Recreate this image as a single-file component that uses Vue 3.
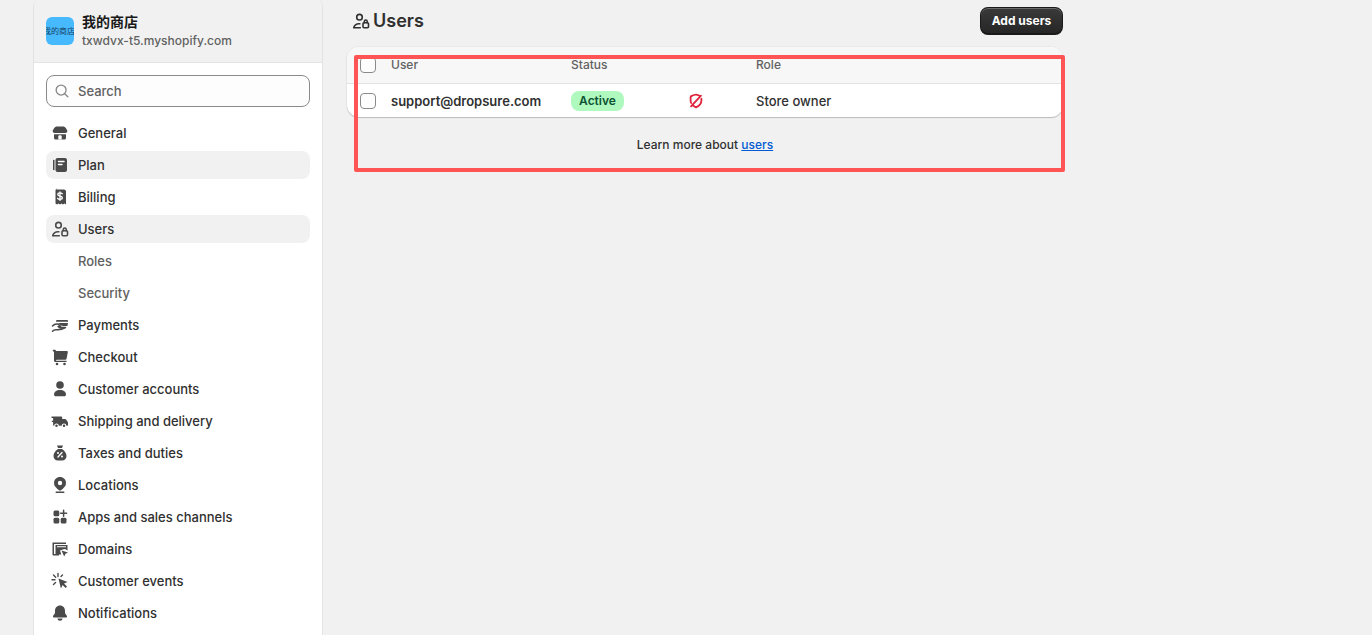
<script setup>
const nav = [
  { label: 'General', icon: 'store' },
  { label: 'Plan', icon: 'plan', active: true },
  { label: 'Billing', icon: 'bill' },
  { label: 'Users', icon: 'users', active: true },
  { label: 'Roles', sub: true },
  { label: 'Security', sub: true },
  { label: 'Payments', icon: 'pay' },
  { label: 'Checkout', icon: 'cart' },
  { label: 'Customer accounts', icon: 'person' },
  { label: 'Shipping and delivery', icon: 'truck' },
  { label: 'Taxes and duties', icon: 'tax' },
  { label: 'Locations', icon: 'pin' },
  { label: 'Apps and sales channels', icon: 'apps' },
  { label: 'Domains', icon: 'domain' },
  { label: 'Customer events', icon: 'events' },
  { label: 'Notifications', icon: 'bell' }
]
</script>

<template>
  <div class="page">
    <aside class="sidebar">
      <header class="store">
        <div class="avatar"><span>我的商店</span></div>
        <div class="store-text">
          <div class="store-name">我的商店</div>
          <div class="store-url">txwdvx-t5.myshopify.com</div>
        </div>
      </header>
      <div class="side-body">
        <div class="search">
          <svg viewBox="0 0 20 20" class="search-icon" fill="none" stroke="#8a8a8a" stroke-width="1.5" stroke-linecap="round">
            <circle cx="9" cy="9" r="5.5" /><path d="M13 13l3.5 3.500" />
          </svg>
          <span>Search</span>
        </div>
        <nav class="nav">
          <div v-for="item in nav" :key="item.label" class="item" :class="{ active: item.active, sub: item.sub }">
            <svg v-if="item.icon" viewBox="0 0 20 20" class="icon" fill="#4a4a4a">
              <template v-if="item.icon === 'store'">
                <path d="M7 3.500h6c1.200 0 2.200.6 2.800 1.600l1.300 2.200c.7 1.200-.2 2.700-1.600 2.700H4.500c-1.400 0-2.300-1.500-1.600-2.700l1.300-2.200C4.800 4.100 5.800 3.500 7 3.500z" />
                <path d="M4 11.200h12v3.800c0 .8-.7 1.500-1.500 1.500h-9C4.700 16.500 4 15.800 4 15z" />
                <path d="M8.300 16.500v-3c0-.8.700-1.300 1.700-1.300s1.700.5 1.700 1.300v3z" fill="#fff" />
              </template>
              <template v-else-if="item.icon === 'plan'">
                <path d="M3 5.500c0-.4.3-.7.7-.7s.8.300.8.700v9c0 .4-.4.700-.8.700S3 14.900 3 14.500zM7.500 3h7.500c1.100 0 2 .9 2 2v10c0 1.100-.9 2-2 2H7.500c-1.100 0-2-.9-2-2V5c0-1.100.9-2 2-2z" />
                <path d="M8.500 6.500h5.500M8.500 9.500h3.500" stroke="#fff" stroke-width="1.500" stroke-linecap="round" fill="none" />
              </template>
              <template v-else-if="item.icon === 'bill'">
                <path d="M6 2.500h8c1.100 0 2 .9 2 2v13l-1.600-1-1.400 1-1.500-1-1.500 1-1.500-1-1.400 1-1.600-1v-13c0-1.100.9-2 2-2z" />
                <path d="M12.300 6.800c-.4-.6-1.200-.9-2.300-.9-1.300 0-2.200.6-2.200 1.600 0 2.200 4.500 1.100 4.500 3.200 0 1-.9 1.600-2.300 1.600-1.100 0-2-.4-2.400-1M10 4.800v8.600" fill="none" stroke="#fff" stroke-width="1.300" stroke-linecap="round" />
              </template>
              <template v-else-if="item.icon === 'users'">
                <g fill="none" stroke="#4a4a4a" stroke-width="1.600" stroke-linecap="round" stroke-linejoin="round">
                  <circle cx="8.500" cy="6.200" r="2.800" />
                  <path d="M2.800 16.500c.2-1 .8-1.900 1.700-2.600 1.200-.9 2.700-1.300 4.300-1.100" />
                  <path d="M2.800 16.800h6.500" />
                  <rect x="12" y="11.800" width="5.500" height="5" rx="1" />
                  <path d="M13.300 11.800v-1.300c0-2 2.900-2 2.900 0v1.300" />
                </g>
              </template>
              <template v-else-if="item.icon === 'pay'">
                <path d="M7 5h10.200c.5 0 .8.300.8.700v1H6c0-1 .3-1.700 1-1.700zM8.500 8H18l-.6 3h-4.400c-1.500 0-2.500-.5-3-1.200-.4-.5-1-1.400-2-1.800z" />
                <path d="M2.500 11c1.300-1.500 3-2.300 5-2 1.500.2 2.300 1.500 3 2.500H8M2.500 16.200c1.200-1.500 2.500-1.700 4.500-1.500 2.500.2 5.500-.5 8.500-2.200H9" fill="none" stroke="#4a4a4a" stroke-width="1.500" stroke-linecap="round" stroke-linejoin="round" />
              </template>
              <template v-else-if="item.icon === 'cart'">
                <path d="M2.800 2.800h1.700c.8 0 1.400.5 1.500 1.200h10.800c.7 0 1.200.6 1 1.300l-1.200 6.200c-.1.800-.8 1.300-1.500 1.300H7.300c-.7 0-1.400.4-1.400.9h10.600v1.300H5.500c-1 0-1.500-.7-1.500-1.500V5.500c0-.7-.3-1.300-1.200-1.300z" />
                <circle cx="7" cy="17" r="1.300" /><circle cx="14.500" cy="17" r="1.300" />
              </template>
              <template v-else-if="item.icon === 'person'">
                <circle cx="10" cy="6" r="3.800" />
                <path d="M10 11c3.600 0 6 2 6 4.500 0 1-.8 1.800-1.800 1.800H5.800c-1 0-1.800-.8-1.800-1.800C4 13 6.400 11 10 11z" />
              </template>
              <template v-else-if="item.icon === 'truck'">
                <path d="M1.500 5.500H11c.7 0 1.200.5 1.200 1.200V8h2.700c.5 0 .9.200 1.200.6l1.500 2.200c.2.300.4.600.4 1V14c0 .4-.3.700-.7.700H3.800c-.4 0-.7-.3-.7-.7v-3H1.800V9.700h1.300V7H1.500z" />
                <circle cx="6.500" cy="14.800" r="1.800" stroke="#fff" stroke-width="1.100" /><circle cx="14" cy="14.800" r="1.800" stroke="#fff" stroke-width="1.100" />
              </template>
              <template v-else-if="item.icon === 'tax'">
                <path d="M7 2.500h6l-1 2.500H8zM8 6h4c2.800 1.700 4.500 4.500 4.500 7 0 2.700-1.800 4.500-4.500 4.500H8c-2.700 0-4.500-1.800-4.500-4.500 0-2.500 1.700-5.300 4.500-7z" />
                <path d="M8 14l4-4.500" stroke="#fff" stroke-width="1.300" stroke-linecap="round" />
                <circle cx="8" cy="10" r="1" fill="#fff" /><circle cx="12" cy="13.500" r="1" fill="#fff" />
              </template>
              <template v-else-if="item.icon === 'pin'">
                <path d="M10 2c3.300 0 6 2.600 6 5.900 0 3-2.500 5.400-5 7.300-.6.400-1.400.4-2 0-2.500-1.900-5-4.300-5-7.300C4 4.600 6.700 2 10 2z" />
                <circle cx="10" cy="8" r="2.200" fill="#fff" />
                <rect x="5.500" y="16.500" width="9" height="1.500" rx=".7" />
              </template>
              <template v-else-if="item.icon === 'apps'">
                <rect x="3.500" y="3.500" width="5.800" height="5.800" rx="1.500" />
                <rect x="3.500" y="10.700" width="5.800" height="5.800" rx="1.500" />
                <rect x="10.700" y="10.700" width="5.800" height="5.800" rx="1.500" />
                <path d="M13.600 3.200v6M10.600 6.200h6" stroke="#4a4a4a" stroke-width="1.500" stroke-linecap="round" />
              </template>
              <template v-else-if="item.icon === 'domain'">
                <path d="M2.500 3.500h13.500v1.500H4v10h5v1.500H3.500c-.6 0-1-.4-1-1z" />
                <path d="M5.500 6h12v5.500l-2.500-1.500-1.500.3-3.500 1.200 1.300 4H6.500c-.6 0-1-.4-1-1zM7 7.200v1h9v-1z" />
                <path d="M11.500 11.500l6.500 2-2.500 1.300-1.300 2.700z" />
              </template>
              <template v-else-if="item.icon === 'events'">
                <path d="M8.500 7.500l9 3.500-3.500 1.600 3 3-1.400 1.400-3-3-1.700 3.500z" />
                <path d="M8 2.500v3M3.500 4l2.200 2.200M12.500 4l-1.500 1.500M2 8.700h3M3.500 13.500l2-2" stroke="#4a4a4a" stroke-width="1.400" stroke-linecap="round" />
              </template>
              <template v-else-if="item.icon === 'bell'">
                <path d="M10 2.500c3 0 5 2.300 5 5.200v2.300c0 .7 2 2.300 2 3.500 0 .7-.5 1-1.200 1H4.200c-.7 0-1.200-.3-1.200-1 0-1.200 2-2.800 2-3.500V7.700c0-2.900 2-5.200 5-5.200z" />
                <path d="M7.500 15.500h5c0 1.300-1.100 2.300-2.500 2.300s-2.500-1-2.500-2.300z" />
              </template>
            </svg>
            <span class="label">{{ item.label }}</span>
          </div>
        </nav>
      </div>
    </aside>

    <main class="main">
      <div class="title-row">
        <div class="title">
          <svg viewBox="0 0 20 20" class="title-icon" fill="none" stroke="#303030" stroke-width="1.600" stroke-linecap="round" stroke-linejoin="round">
            <circle cx="8.500" cy="6.200" r="2.800" />
            <path d="M2.800 16.500c.2-1 .8-1.900 1.700-2.600 1.200-.9 2.700-1.300 4.300-1.100" />
            <path d="M2.800 16.800h6.500" />
            <rect x="12" y="11.800" width="5.500" height="5" rx="1" />
            <path d="M13.300 11.800v-1.300c0-2 2.900-2 2.900 0v1.300" />
          </svg>
          <h1>Users</h1>
        </div>
        <button class="primary">Add users</button>
      </div>

      <section class="card">
        <div class="row head">
          <span class="check"></span>
          <span class="th">User</span>
          <span class="th">Status</span>
          <span></span>
          <span class="th">Role</span>
        </div>
        <div class="row body">
          <span class="check"></span>
          <span class="email">support@dropsure.com</span>
          <span><span class="badge">Active</span></span>
          <span class="shield">
            <svg viewBox="0 0 20 20" width="18" height="18" fill="none" stroke="#e0243c" stroke-width="2" stroke-linecap="round" stroke-linejoin="round">
              <path d="M13.800 4.200C12.500 3.600 11 3 10 3 8.500 3 6 4 4.800 4.600 4.300 4.900 4 5.300 4 6v3.500c0 1 .2 2 .7 2.800" />
              <path d="M16 7.500v2c0 3.300-2.500 6-6 7.500-1.200-.5-2.300-1.200-3.200-2" />
              <path d="M4.500 16L15.500 4" />
            </svg>
          </span>
          <span class="role">Store owner</span>
        </div>
      </section>

      <p class="learn">Learn more about <a href="#">users</a></p>
      <div class="annotation"></div>
    </main>
  </div>
</template>

<style>
html, body { margin: 0; background: #f1f1f1; overflow: hidden; }
</style>

<style scoped>
.page {
  display: flex;
  height: 635px;
  overflow: hidden;
  padding-left: 33px;
  box-sizing: border-box;
  background: #f1f1f1;
  font-family: Inter, "Noto Sans CJK SC", sans-serif;
  font-size: 13px;
  color: #303030;
}
.sidebar {
  width: 290px;
  height: 660px;
  margin-top: -5px;
  flex: none;
  box-sizing: border-box;
  border: 1px solid #e3e3e3;
  border-radius: 12px;
  background: #fff;
  overflow: hidden;
}
.store {
  display: flex;
  align-items: center;
  gap: 8px;
  height: 67px;
  box-sizing: border-box;
  padding: 3px 12px 0;
  background: #f1f1f1;
  border-bottom: 1px solid #e3e3e3;
}
.avatar {
  width: 28px;
  height: 28px;
  border-radius: 6px;
  background: #47b9ff;
  overflow: hidden;
  display: flex;
  justify-content: flex-end;
  align-items: center;
  flex: none;
}
.avatar span {
  font-size: 8px;
  white-space: nowrap;
  color: #143f5e;
  line-height: 12px;
  flex: none;
  margin-right: -1px;
}
.store-text { min-width: 0; }
.store-name {
  font-size: 14px;
  font-weight: 600;
  line-height: 20px;
  color: #1a1a1a;
}
.store-url {
  font-size: 12px;
  font-weight: 450;
  line-height: 18px;
  color: #616161;
}
.side-body { padding: 12px 12px 0; }
.search {
  display: flex;
  align-items: center;
  height: 32px;
  box-sizing: border-box;
  border: 1px solid #8a8a8a;
  border-radius: 8px;
  background: #fdfdfd;
  padding-left: 6px;
  gap: 7px;
  color: #616161;
  font-weight: 450;
}
.search-icon { width: 18px; height: 18px; flex: none; }
.nav {
  display: flex;
  flex-direction: column;
  gap: 4px;
  margin-top: 12px;
}
.item {
  display: flex;
  align-items: center;
  gap: 8px;
  height: 28px;
  padding-left: 4px;
  border-radius: 8px;
  font-weight: 550;
  white-space: nowrap;
}
.item.active { background: #f1f1f1; }
.item.sub { padding-left: 32px; color: #616161; }
.icon { width: 20px; height: 20px; flex: none; }
.main {
  position: relative;
  width: 716px;
  margin-left: 24px;
  flex: none;
}
.title-row {
  display: flex;
  align-items: center;
  justify-content: space-between;
  height: 28px;
  margin-top: 7px;
}
.title {
  display: flex;
  align-items: center;
  gap: 2px;
  padding-left: 4px;
}
.title-icon { width: 20px; height: 20px; }
h1 {
  margin: 0;
  font-size: 18px;
  font-weight: 600;
  color: #303030;
  line-height: 28px;
}
.primary {
  width: 83px;
  height: 28px;
  padding: 0 0 1px;
  border: 1px solid #1a1a1a;
  border-bottom-width: 2px;
  border-radius: 8px;
  background: linear-gradient(#3a3a3a, #262626);
  box-shadow: inset 0 1px 0 rgba(255, 255, 255, .25);
  color: #fff;
  font: 650 12px Inter, sans-serif;
}
.card {
  margin-top: 12px;
  height: 70px;
  box-sizing: border-box;
  border-radius: 12px;
  background: #fff;
  overflow: hidden;
  box-shadow: 0 1px 1px rgba(0, 0, 0, .2), 0 0 0 1px rgba(0, 0, 0, .03);
}
.row {
  display: grid;
  grid-template-columns: 44px 180px 110px 75px 1fr;
  align-items: center;
}
.head {
  height: 37px;
  background: #f7f7f7;
  border-bottom: 1px solid #e3e3e3;
  box-sizing: border-box;
  color: #616161;
  font-size: 12px;
  font-weight: 550;
}
.th { margin-top: -2px; }
.body { height: 33px; }
.check {
  width: 16px;
  height: 16px;
  box-sizing: border-box;
  margin-left: 13px;
  border: 1px solid #8a8a8a;
  border-radius: 4px;
  background: #fdfdfd;
}
.email { font-weight: 580; color: #303030; }
.badge {
  display: inline-block;
  width: 53px;
  height: 20px;
  line-height: 19px;
  text-align: center;
  border-radius: 8px;
  background: #aff9bf;
  color: #0c5132;
  font-size: 12px;
  font-weight: 600;
}
.shield { display: flex; padding-left: 6px; }
.role { font-weight: 450; }
.learn {
  margin: 20px 0 0;
  text-align: center;
  font-size: 12px;
  font-weight: 450;
  line-height: 16px;
}
.learn a { color: #005bd3; }
.annotation {
  position: absolute;
  left: 7px;
  top: 55px;
  width: 711px;
  height: 117px;
  box-sizing: border-box;
  border: 4px solid #ff5454;
  border-radius: 2px;
}
</style>
